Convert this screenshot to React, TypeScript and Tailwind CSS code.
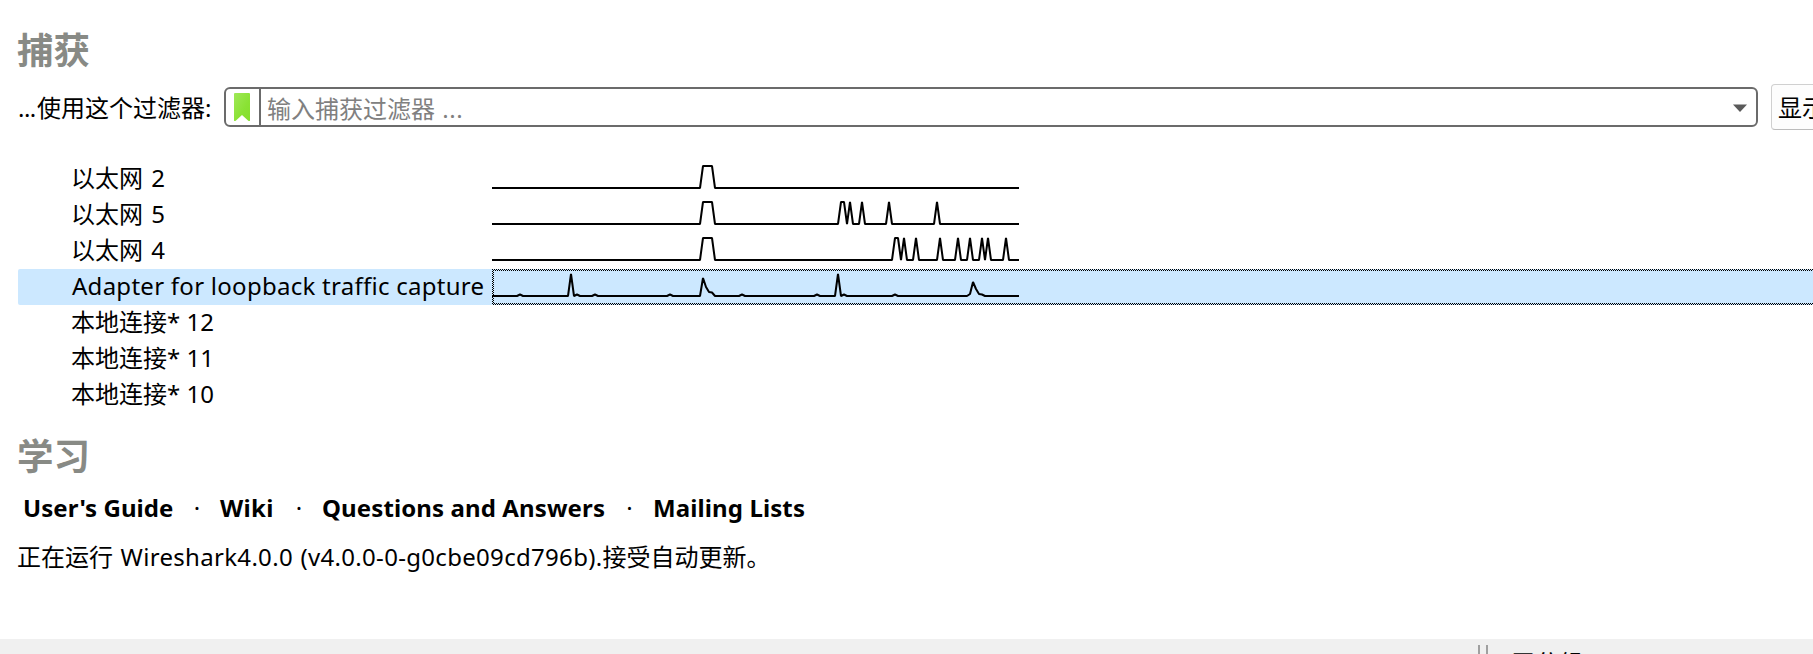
type Spark = [number, number][];

const spike = (x: number, top = 5): Spark => [[x - 3, 27], [x, top], [x + 3, 27]];
const bump = (x: number): Spark => [[x - 3, 27], [x, 25.5], [x + 3, 27]];
const plateau = (from: number, to: number): Spark => [[from - 3, 27], [from, 5], [to, 5], [to + 3, 27]];

const interfaces: { name: string; label: string; points?: Spark; selected?: boolean }[] = [
  { name: "以太网 2", label: "pl-[53px] [word-spacing:2px]", points: plateau(211, 220) },
  {
    name: "以太网 5",
    label: "pl-[53px] [word-spacing:2px]",
    points: [...plateau(211, 220), ...plateau(349, 352), ...spike(358), ...spike(370), ...spike(397), ...spike(445)],
  },
  {
    name: "以太网 4",
    label: "pl-[53px] [word-spacing:2px]",
    points: [
      ...plateau(211, 220), ...plateau(403, 406), ...spike(412), ...spike(424), ...spike(448),
      ...spike(466), ...spike(478), ...spike(490), ...spike(496), ...spike(514),
    ],
  },
  {
    name: "Adapter for loopback traffic capture",
    label: "pl-[54px] tracking-[0.27px] [font-variant-ligatures:none]",
    selected: true,
    points: [
      ...bump(28), ...spike(79), ...bump(85), ...bump(103), ...bump(178),
      [208, 27], [211, 9], [214, 18], [217, 23], [220, 23.5], [223, 27],
      ...bump(250), ...bump(325), ...spike(346), ...bump(352), ...bump(403),
      [475, 27], [478, 25], [481, 13], [484, 20], [487, 25], [490, 25.5], [493, 27],
    ],
  },
  { name: "本地连接* 12", label: "pl-[53px]" },
  { name: "本地连接* 11", label: "pl-[53px]" },
  { name: "本地连接* 10", label: "pl-[53px]" },
];

function Sparkline({ points }: { points: Spark }) {
  const line = [[0, 27], ...points, [527, 27]].map((p) => p.join(",")).join(" ");
  return (
    <svg width="527" height="36" className="block" fill="none" stroke="#000" strokeWidth="2">
      <polyline points={line} strokeLinejoin="bevel" />
    </svg>
  );
}

function DottedFrame() {
  return (
    <svg className="absolute inset-0 h-full w-full" shapeRendering="crispEdges">
      <defs>
        <pattern id="dots" width="2" height="2" patternUnits="userSpaceOnUse">
          <rect width="1" height="1" fill="#000" />
          <rect x="1" y="1" width="1" height="1" fill="#000" />
        </pattern>
      </defs>
      <rect width="1400" height="2" fill="url(#dots)" />
      <rect y="34" width="1400" height="2" fill="url(#dots)" />
      <rect width="2" height="36" fill="url(#dots)" />
    </svg>
  );
}

function Dot({ className }: { className: string }) {
  return <span className={`${className} shrink-0 text-center font-normal`}>·</span>;
}

export default function App() {
  return (
    <div className="flex h-[654px] w-full flex-col overflow-hidden bg-white font-['Noto_Sans','Noto_Sans_CJK_SC',sans-serif] text-2xl whitespace-pre text-black">
      <h1 className="mt-[25px] ml-[17px] h-[50px] shrink-0 text-[36.5px] leading-[50px] font-bold text-[#888a85]">捕获</h1>

      <div className="mt-[9px] flex h-[46px] shrink-0 items-start pl-[18px]">
        <label className="mt-[3px] w-[206px] shrink-0 leading-[42px]">
          <span className="inline-block w-[19px] tracking-[-0.5px]">...</span>使用这个过滤器:
        </label>
        <div className="mt-[3px] flex h-10 w-[1534px] shrink-0 items-center rounded-[6px] border-2 border-[#6b6b6b]">
          <div className="flex h-full w-[35px] items-start border-r-2 border-[#6b6b6b] pt-1 pl-2">
            <svg width="16" height="28" viewBox="0 0 16 28">
              <defs>
                <linearGradient id="mark" x1="0" y1="0" x2="1" y2="1">
                  <stop offset="0" stopColor="#9fe858" />
                  <stop offset="0.6" stopColor="#8ae234" />
                  <stop offset="1" stopColor="#84de2b" />
                </linearGradient>
              </defs>
              <path d="M1 0H15Q16 0 16 1V27.5Q15.500 28.500 14 27.500L8 22L2 27.500Q.5 28.500 0 27.500V1Q0 0 1 0Z" fill="url(#mark)" />
            </svg>
          </div>
          <span className="pt-[3px] pl-[6px] leading-9 text-[#808080] [word-spacing:1px]">
            输入捕获过滤器 <span className="tracking-[0.6px]">...</span>
          </span>
          <svg className="mt-px mr-[9px] ml-auto" width="14" height="8" viewBox="0 0 14 8">
            <path d="M0 .5H14L7 8Z" fill="#5a5a5a" />
          </svg>
        </div>
        <div className="ml-[13px] h-[46px] w-[200px] shrink-0 rounded-[4px] border border-[#d0d0d0] border-b-[#bcbcbc] bg-[#fdfdfd] pl-[6px] leading-[46px]">
          显示
        </div>
      </div>

      <div className="mt-[31px] ml-[18px] shrink-0">
        {interfaces.map((item) => (
          <div
            key={item.name}
            className={item.selected ? "flex h-9 rounded-l-[2px] bg-[#cce8ff]" : "flex h-9"}
          >
            <span className={`${item.label} w-[474px] shrink-0 leading-[34px]`}>{item.name}</span>
            <div className="relative flex-1 overflow-hidden">
              {item.selected && <DottedFrame />}
              {item.points && <Sparkline points={item.points} />}
            </div>
          </div>
        ))}
      </div>

      <h1 className="mt-[18px] ml-[17px] h-[50px] shrink-0 text-[36.5px] leading-[50px] font-bold text-[#888a85]">学习</h1>

      <nav className="mt-[9px] flex h-9 shrink-0 pl-[23px] leading-9 font-bold tracking-[0.11px]">
        <a className="w-[151px] shrink-0 tracking-[0.05px]">User's Guide</a>
        <Dot className="w-[46px]" />
        <a className="w-[56px] shrink-0 tracking-[0.3px]">Wiki</a>
        <Dot className="w-[46px]" />
        <a className="w-[284px] shrink-0">Questions and Answers</a>
        <Dot className="w-[47px]" />
        <a>Mailing Lists</a>
      </nav>
      <p className="mt-[13px] ml-[17px] h-9 shrink-0 leading-9">
        正在运行<span className="tracking-[0.31px] [word-spacing:1px]"> Wireshark4.0.0 (v4.0.0-0-g0cbe09cd796b).</span>接受自动更新。
      </p>

      <footer className="mt-auto flex h-[15px] shrink-0 overflow-hidden bg-[#f0f0f0] pt-[6px] pl-[1478px]">
        <div className="h-9 w-[10px] shrink-0 border-x-2 border-[#a0a0a0]" />
        <span className="ml-[23px] leading-9">无分组</span>
      </footer>
    </div>
  );
}
